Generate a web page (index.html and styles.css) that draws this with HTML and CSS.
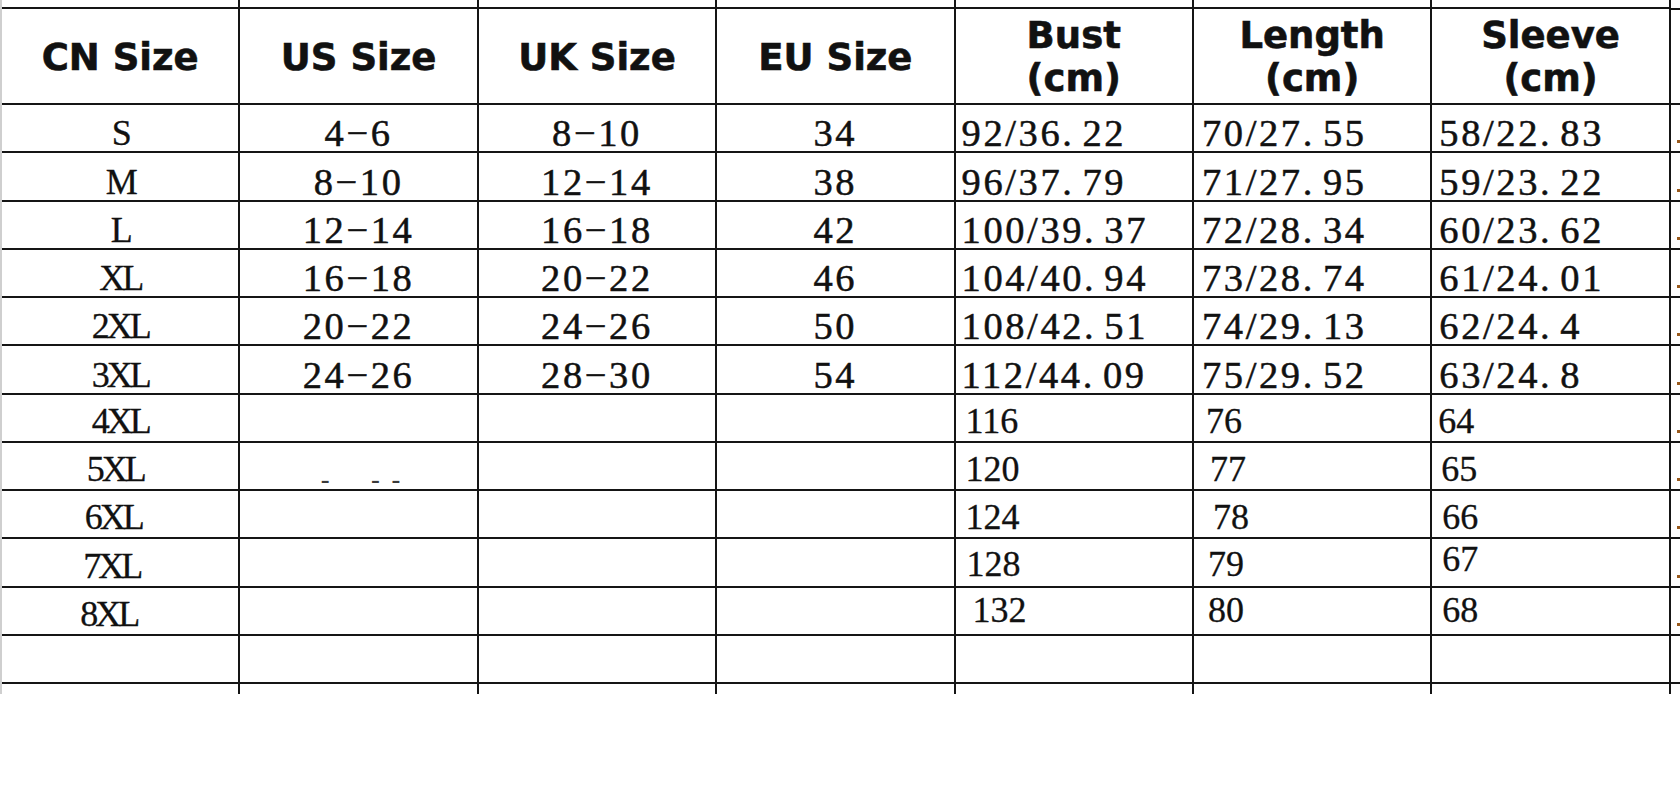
FILE: index.html
```html
<!DOCTYPE html>
<html lang="en">
<head>
<meta charset="utf-8">
<title>Size Chart</title>
<link rel="stylesheet" href="styles.css">
</head>
<body>
<div class="sheet">
  <!-- top strip -->
  <div class="c t"></div><div class="c t"></div><div class="c t"></div><div class="c t"></div>
  <div class="c t"></div><div class="c t"></div><div class="c t"></div><div class="c t x"></div>

  <!-- header -->
  <div class="c h">CN Size</div>
  <div class="c h">US Size</div>
  <div class="c h">UK Size</div>
  <div class="c h">EU Size</div>
  <div class="c h">Bust<br>(cm)</div>
  <div class="c h">Length<br>(cm)</div>
  <div class="c h">Sleeve<br>(cm)</div>
  <div class="c h x"></div>

  <!-- S -->
  <div class="c sz">S</div><div class="c m">4−6</div><div class="c m">8−10</div><div class="c m">34</div>
  <div class="c m l b">92/36<span class="pt">.</span>22</div><div class="c m l n">70/27<span class="pt">.</span>55</div><div class="c m l v">58/22<span class="pt">.</span>83</div><div class="c x"><span class="spk"></span></div>
  <!-- M -->
  <div class="c sz">M</div><div class="c m">8−10</div><div class="c m">12−14</div><div class="c m">38</div>
  <div class="c m l b">96/37<span class="pt">.</span>79</div><div class="c m l n">71/27<span class="pt">.</span>95</div><div class="c m l v">59/23<span class="pt">.</span>22</div><div class="c x"><span class="spk"></span></div>
  <!-- L -->
  <div class="c sz">L</div><div class="c m">12−14</div><div class="c m">16−18</div><div class="c m">42</div>
  <div class="c m l b">100/39<span class="pt">.</span>37</div><div class="c m l n">72/28<span class="pt">.</span>34</div><div class="c m l v">60/23<span class="pt">.</span>62</div><div class="c x"><span class="spk"></span></div>
  <!-- XL -->
  <div class="c sz">XL</div><div class="c m">16−18</div><div class="c m">20−22</div><div class="c m">46</div>
  <div class="c m l b">104/40<span class="pt">.</span>94</div><div class="c m l n">73/28<span class="pt">.</span>74</div><div class="c m l v">61/24<span class="pt">.</span>01</div><div class="c x"><span class="spk"></span></div>
  <!-- 2XL -->
  <div class="c sz">2XL</div><div class="c m">20−22</div><div class="c m">24−26</div><div class="c m">50</div>
  <div class="c m l b">108/42<span class="pt">.</span>51</div><div class="c m l n">74/29<span class="pt">.</span>13</div><div class="c m l v">62/24<span class="pt">.</span>4</div><div class="c x"><span class="spk"></span></div>
  <!-- 3XL -->
  <div class="c sz">3XL</div><div class="c m">24−26</div><div class="c m">28−30</div><div class="c m">54</div>
  <div class="c m l b">112/44<span class="pt">.</span>09</div><div class="c m l n">75/29<span class="pt">.</span>52</div><div class="c m l v">63/24<span class="pt">.</span>8</div><div class="c x"><span class="spk"></span></div>

  <!-- 4XL -->
  <div class="c sz lo">4XL</div><div class="c"></div><div class="c"></div><div class="c"></div>
  <div class="c l lo i10">116</div><div class="c l lo i12">76</div><div class="c l lo i6">64</div><div class="c x"><span class="spk"></span></div>
  <!-- 5XL -->
  <div class="c sz lo r10">5XL</div><div class="c faint"><span>-</span><span>-</span><span>-</span></div><div class="c"></div><div class="c"></div>
  <div class="c l lo i10">120</div><div class="c l lo i16">77</div><div class="c l lo i9">65</div><div class="c x"><span class="spk"></span></div>
  <!-- 6XL -->
  <div class="c sz lo r14">6XL</div><div class="c"></div><div class="c"></div><div class="c"></div>
  <div class="c l lo i10">124</div><div class="c l lo i19">78</div><div class="c l lo i10">66</div><div class="c x"><span class="spk"></span></div>
  <!-- 7XL -->
  <div class="c sz lo r17">7XL</div><div class="c"></div><div class="c"></div><div class="c"></div>
  <div class="c l lo up i11">128</div><div class="c l lo up i14">79</div><div class="c l up2 i10">67</div><div class="c x"><span class="spk"></span></div>
  <!-- 8XL -->
  <div class="c sz lo r23">8XL</div><div class="c"></div><div class="c"></div><div class="c"></div>
  <div class="c l up3 i17">132</div><div class="c l up3 i14">80</div><div class="c l up3 i10">68</div><div class="c x"><span class="spk"></span></div>
  <!-- empty -->
  <div class="c"></div><div class="c"></div><div class="c"></div><div class="c"></div>
  <div class="c"></div><div class="c"></div><div class="c"></div><div class="c x"></div>
  <!-- cut-off row -->
  <div class="c e"></div><div class="c e"></div><div class="c e"></div><div class="c e"></div>
  <div class="c e"></div><div class="c e"></div><div class="c e"></div><div class="c e x"></div>
</div>
</body>
</html>
```

FILE: styles.css
```css
html, body {
  margin: 0;
  padding: 0;
  background: #ffffff;
}

.sheet {
  width: 1680px;
  height: 694px;
  overflow: hidden;
  box-sizing: border-box;
  border-left: 2px solid #cfcfcf;
  display: grid;
  grid-template-columns: repeat(7, 238.4px) 1fr;
  grid-template-rows: 9px 96px repeat(12, 48.25px) 30px;
  background: #ffffff;
}

.c {
  box-sizing: border-box;
  border-right: 2px solid #151515;
  border-bottom: 2px solid #151515;
  display: flex;
  align-items: flex-end;
  justify-content: center;
  font-family: "Liberation Serif", "Times New Roman", serif;
  font-size: 36px;
  line-height: 36px;
  letter-spacing: 0;
  color: #111111;
  -webkit-text-stroke: 0.3px #111111;
  white-space: nowrap;
  overflow: visible;
}

.c.m {
  font-size: 38.5px;
  letter-spacing: 2.6px;
  -webkit-text-stroke: 0.5px #111111;
}

.c.x {
  border-right: none;
  justify-content: flex-start;
  align-items: flex-end;
  padding-left: 6px;
  padding-bottom: 8px;
}

.c.e {
  border-bottom: none;
}

.spk {
  width: 3px;
  height: 3px;
  background: #9a5a1c;
}

.c.h {
  align-items: center;
  text-align: center;
  font-family: "DejaVu Sans", Verdana, sans-serif;
  font-weight: bold;
  font-size: 37px;
  line-height: 43px;
  letter-spacing: 0;
  -webkit-text-stroke: 0.6px #111111;
  padding-top: 2px;
}

.c.sz {
  letter-spacing: -3px;
}

.c.l {
  justify-content: flex-start;
}

.c.b { padding-left: 6px; }
.c.n { padding-left: 8px; }
.c.v { padding-left: 7px; }

.c.lo { padding-bottom: 2px; }
.c.up { padding-bottom: 4px; }
.c.up2 { padding-bottom: 9px; }
.c.up3 { padding-bottom: 6px; }

.c.i6 { padding-left: 6px; }
.c.i9 { padding-left: 9px; }
.c.i10 { padding-left: 10px; }
.c.i11 { padding-left: 11px; }
.c.i12 { padding-left: 12px; }
.c.i14 { padding-left: 14px; }
.c.i16 { padding-left: 16px; }
.c.i17 { padding-left: 17px; }
.c.i19 { padding-left: 19px; }

.c.r10 { padding-right: 10px; }
.c.r14 { padding-right: 14px; }
.c.r17 { padding-right: 17px; }
.c.r23 { padding-right: 23px; }

.pt {
  padding-right: 8px;
}

.c.faint {
  justify-content: flex-start;
  align-items: flex-end;
  gap: 11px;
  padding-left: 80px;
  padding-bottom: 4px;
  font-family: "DejaVu Sans", sans-serif;
  font-size: 26px;
  line-height: 10px;
  -webkit-text-stroke: 0;
  color: #3a3a3a;
}

.c.faint span:first-child {
  margin-right: 30px;
}
```
